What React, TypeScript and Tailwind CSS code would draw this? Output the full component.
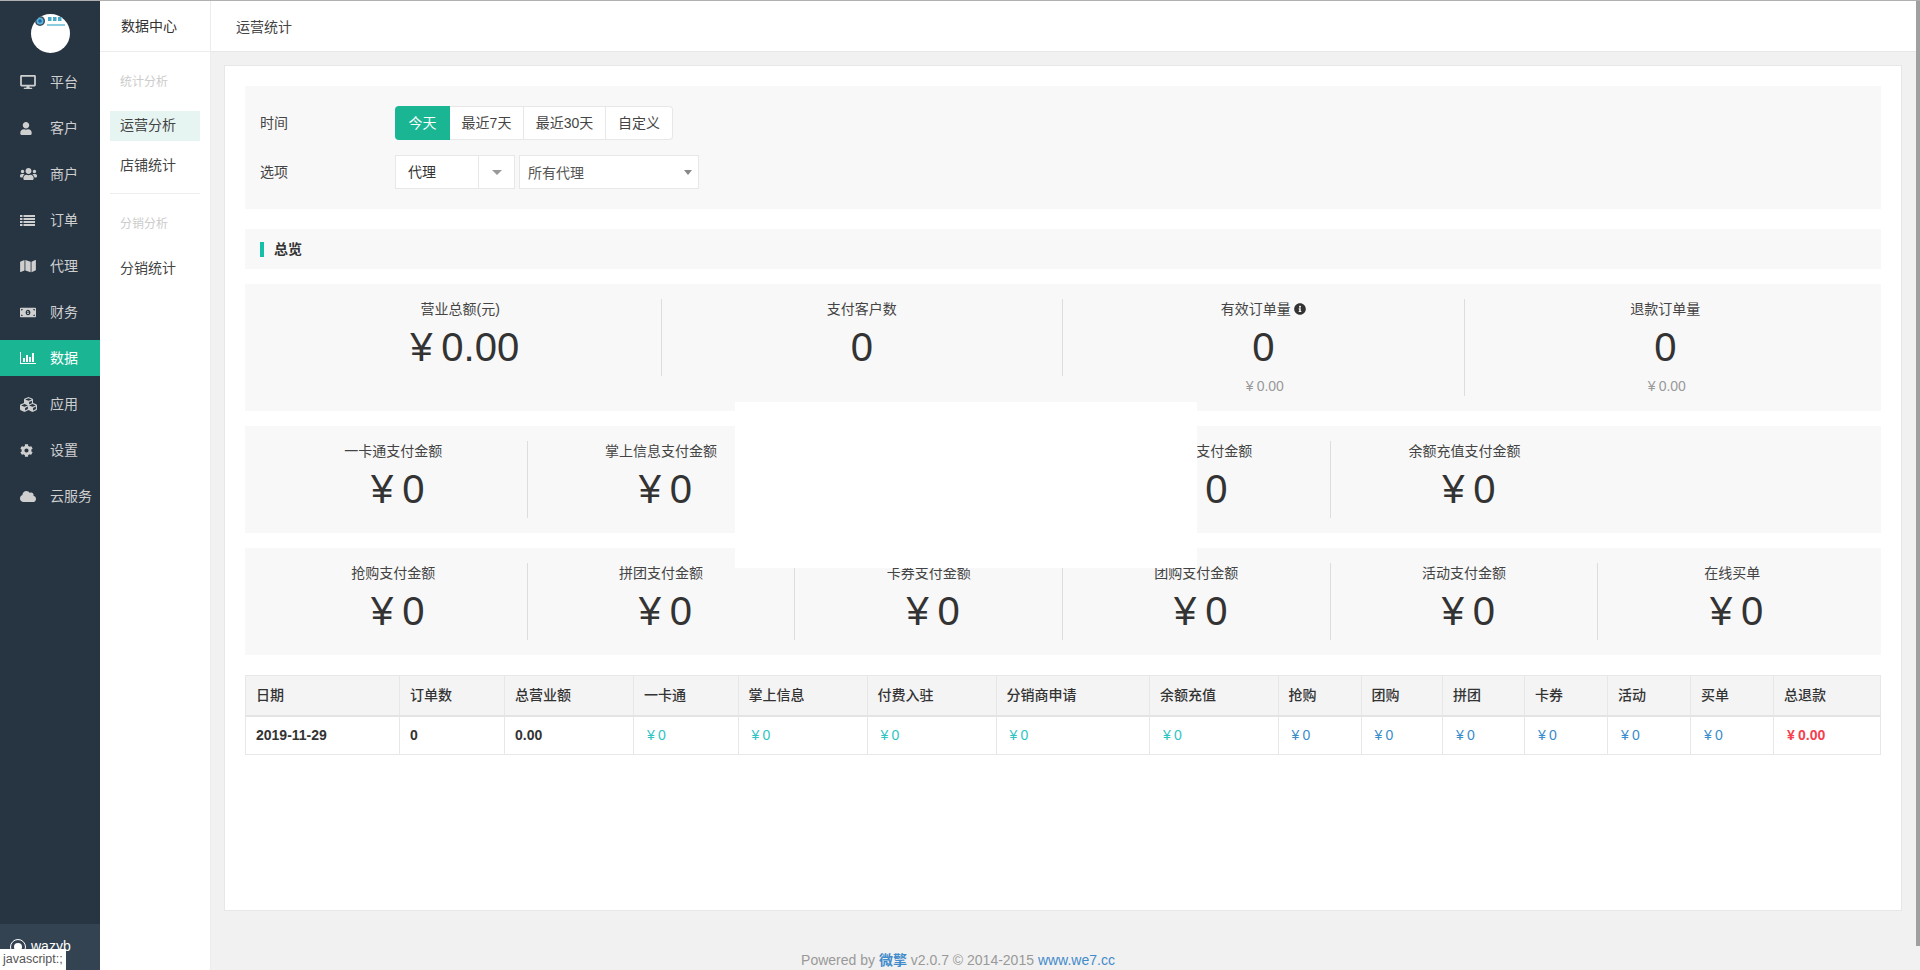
import type { ReactNode } from 'react';
import { FaCloud, FaCog, FaCubes, FaDesktop, FaInfoCircle, FaMap, FaMoneyBillAlt, FaUser, FaUsers } from 'react-icons/fa';

function ListIcon({ className }: { className?: string }) {
  return (
    <svg viewBox="0 0 15 11" fill="currentColor" className={className}>
      {[0, 3, 6, 9].map((y) => (
        <g key={y}>
          <rect x="0" y={y} width="2.5" height="2" />
          <rect x="3.5" y={y} width="11.5" height="2" />
        </g>
      ))}
    </svg>
  );
}

function ChartIcon({ className }: { className?: string }) {
  return (
    <svg viewBox="0 0 16 12" fill="currentColor" className={className}>
      <rect x="0" y="0" width="1" height="12" />
      <rect x="0" y="11" width="16" height="1" />
      <rect x="3" y="6" width="2" height="4" />
      <rect x="6" y="3" width="2" height="7" />
      <rect x="9" y="5" width="2" height="5" />
      <rect x="12" y="1" width="2" height="9" />
    </svg>
  );
}

const menu = [
  { label: '平台', icon: FaDesktop, size: 'h-[14px] w-[16px]' },
  { label: '客户', icon: FaUser, size: 'h-[13px] w-[12px]' },
  { label: '商户', icon: FaUsers, size: 'h-[16px] w-[17px]' },
  { label: '订单', icon: ListIcon, size: 'h-[11px] w-[15px]' },
  { label: '代理', icon: FaMap, size: 'h-[14px] w-[16px]' },
  { label: '财务', icon: FaMoneyBillAlt, size: 'h-[13px] w-[16px]' },
  { label: '数据', icon: ChartIcon, size: 'h-[12px] w-[16px]', active: true },
  { label: '应用', icon: FaCubes, size: 'h-[17px] w-[17px]' },
  { label: '设置', icon: FaCog, size: 'h-[13px] w-[13px]' },
  { label: '云服务', icon: FaCloud, size: 'h-[13px] w-[16px]' },
];

const payRow = ['一卡通支付金额', '掌上信息支付金额', '付费入驻支付金额', '分销申请支付金额', '余额充值支付金额'];
const promoRow = ['抢购支付金额', '拼团支付金额', '卡券支付金额', '团购支付金额', '活动支付金额', '在线买单'];

const columns = [
  { title: '日期', width: 'w-[154px]' },
  { title: '订单数', width: 'w-[105px]' },
  { title: '总营业额', width: 'w-[129px]' },
  { title: '一卡通', width: 'w-[104.5px]' },
  { title: '掌上信息', width: 'w-[129px]' },
  { title: '付费入驻', width: 'w-[129px]' },
  { title: '分销商申请', width: 'w-[153.5px]' },
  { title: '余额充值', width: 'w-[128.5px]' },
  { title: '抢购', width: 'w-[83px]' },
  { title: '团购', width: 'w-[81.5px]' },
  { title: '拼团', width: 'w-[82px]' },
  { title: '卡券', width: 'w-[83px]' },
  { title: '活动', width: 'w-[83px]' },
  { title: '买单', width: 'w-[83px]' },
  { title: '总退款', width: 'w-[106.5px]' },
];

function Yen() {
  return <span className="inline-block w-[1em] text-center">¥</span>;
}

function Logo() {
  return (
    <div className="h-[39px] w-[39px] overflow-hidden rounded-full bg-white">
      <svg viewBox="0 0 39 39" className="h-full w-full">
        <circle cx="9" cy="7" r="5" fill="#3b4a55" />
        <circle cx="9" cy="7" r="3.5" fill="#5ab4e0" />
        <circle cx="9" cy="7" r="1.8" fill="#1d6fa8" />
        <rect x="17" y="3" width="3.5" height="4" fill="#4aa8c8" />
        <rect x="22" y="3" width="3.5" height="4" fill="#4aa8c8" />
        <rect x="27" y="3" width="3.5" height="4" fill="#4aa8c8" />
        <rect x="16" y="10" width="18" height="2" fill="#8cccdf" />
      </svg>
    </div>
  );
}

function Sidebar() {
  return (
    <aside className="relative flex w-[100px] shrink-0 flex-col bg-[#273543]">
      <div className="flex h-[63px] justify-center pt-[13px]">
        <Logo />
      </div>
      <nav className="flex flex-col gap-[10px]">
        {menu.map(({ label, icon: Icon, size, active }) => (
          <div
            key={label}
            className={`flex h-[36px] items-center text-[14px] ${active ? 'bg-[#1ab694] text-white' : 'text-[#cfcfcf]'}`}
          >
            <span className="flex w-[50px] items-center pl-[20px]">
              <Icon className={size} />
            </span>
            {label}
          </div>
        ))}
      </nav>
      <div className="mt-auto flex h-[46px] items-center gap-[5px] bg-[#344352] pb-[1px] pl-[10px] text-[14px] text-white">
        <span className="flex h-[16px] w-[16px] items-center justify-center rounded-full border border-white">
          <span className="h-[8px] w-[8px] rounded-full bg-white" />
        </span>
        wazyb
      </div>
      <div className="absolute bottom-0 left-0 h-[21px] w-[66px] bg-white pl-[3px] text-[12.5px] leading-[20px] text-[#555]">
        javascript:;
      </div>
    </aside>
  );
}

function SubMenu() {
  return (
    <aside className="flex w-[111px] shrink-0 flex-col border-r border-[#ececec] bg-white text-[14px] text-[#444]">
      <div className="flex h-[51px] items-center border-b border-[#ececec] pl-[21px] pt-[1px] text-[#333]">数据中心</div>
      <div className="flex flex-col px-[10px]">
        <div className="flex h-[59px] items-center pl-[10px] text-[12px] text-[#ccc]">统计分析</div>
        <div className="flex h-[30px] items-center bg-[#e7f5f2] pb-[1px] pl-[10px]">运营分析</div>
        <div className="mb-[14px] flex h-[38px] items-center pl-[10px] pt-[10px]">店铺统计</div>
        <div className="h-px bg-[#eee]" />
        <div className="flex h-[60px] items-center pl-[10px] text-[12px] text-[#ccc]">分销分析</div>
        <div className="flex h-[28px] items-center pl-[10px]">分销统计</div>
      </div>
    </aside>
  );
}

function Stat({ label, value, sub, divider = true }: { label: ReactNode; value?: ReactNode; sub?: ReactNode; divider?: boolean }) {
  return (
    <div className={`text-center ${divider ? 'border-r border-[#ddd]' : ''}`}>
      <div className="h-[20px] text-[14px] leading-[20px] text-[#444]">{label}</div>
      <div className="h-[57px] text-[40px] leading-[57px] text-[#333]">{value}</div>
      {sub && <div className="h-[20px] text-[14px] leading-[20px] text-[#999]">{sub}</div>}
    </div>
  );
}

function MoneyRow({ labels }: { labels: string[] }) {
  return (
    <div className="grid grid-cols-6 bg-[#f8f8f8] px-[15px] py-[15px]">
      {labels.map((label, i) => (
        <Stat
          key={label}
          label={label}
          value={
            <>
              <Yen />0
            </>
          }
          divider={i < 5 && (labels.length === 6 || i < 4)}
        />
      ))}
    </div>
  );
}

function Filters() {
  const ranges = ['最近7天', '最近30天', '自定义'];
  return (
    <div className="flex flex-col gap-[15px] bg-[#f8f8f8] px-[15px] py-[20px] text-[14px] text-[#444]">
      <div className="flex h-[34px] items-center">
        <div className="w-[135px]">时间</div>
        <div className="flex h-[34px] items-stretch">
          <div className="flex w-[55px] items-center justify-center rounded-l-[4px] bg-[#1ab694] text-white">今天</div>
          {ranges.map((r, i) => (
            <div
              key={r}
              className={`flex items-center justify-center border-y border-r border-[#e7e7e7] bg-white ${
                i === 0 ? 'w-[74px]' : i === 1 ? 'w-[82px]' : 'w-[67px] rounded-r-[4px]'
              }`}
            >
              {r}
            </div>
          ))}
        </div>
      </div>
      <div className="flex h-[34px] items-center">
        <div className="w-[135px]">选项</div>
        <div className="flex h-[34px] w-[120px] items-stretch border border-[#e7e7e7] bg-white text-[#333]">
          <div className="flex w-[83px] items-center border-r border-[#e7e7e7] pl-[12px]">代理</div>
          <div className="flex flex-1 items-center justify-center">
            <span className="h-0 w-0 border-x-[5px] border-t-[5px] border-x-transparent border-t-[#999]" />
          </div>
        </div>
        <div className="ml-[4px] flex h-[34px] w-[180px] items-center justify-between border border-[#e7e7e7] bg-white pl-[8px] pr-[6px] text-[#555]">
          <span className="pt-[2px]">所有代理</span>
          <span className="h-0 w-0 border-x-[4px] border-t-[5px] border-x-transparent border-t-[#888]" />
        </div>
      </div>
    </div>
  );
}

function DataTable() {
  const teal = 'text-[#2fc4c4]';
  const blue = 'text-[#3a8ccb]';
  return (
    <table className="w-[1635px] table-fixed border-collapse border border-[#e7e7e7] text-[14px] text-[#333]">
      <thead>
        <tr className="h-[40px] border-b-2 border-[#e4e4e4] bg-[#f4f4f4]">
          {columns.map((c) => (
            <th key={c.title} className={`${c.width} border-r border-[#e7e7e7] px-[10px] text-left font-medium`}>
              {c.title}
            </th>
          ))}
        </tr>
      </thead>
      <tbody>
        <tr className="h-[39px] font-bold">
          <td className="border-r border-[#e7e7e7] px-[10px]">2019-11-29</td>
          <td className="border-r border-[#e7e7e7] px-[10px]">0</td>
          <td className="border-r border-[#e7e7e7] px-[10px]">0.00</td>
          {columns.slice(3, 14).map((c, i) => (
            <td key={c.title} className={`border-r border-[#e7e7e7] px-[10px] font-normal ${i < 5 ? teal : blue}`}>
              <Yen />0
            </td>
          ))}
          <td className="px-[10px] text-[#f5404f]">
            <Yen />0.00
          </td>
        </tr>
      </tbody>
    </table>
  );
}

function Content() {
  return (
    <div className="relative flex h-[846px] flex-col border border-[#e7e7e7] bg-white p-[20px]">
      <Filters />
      <div className="mt-[20px] flex h-[40px] items-center bg-[#f8f8f8] pl-[15px] text-[14px] font-semibold text-[#333]">
        <span className="mr-[10px] h-[15px] w-[4px] bg-[#14c0a8]" />
        总览
      </div>
      <div className="mt-[15px] grid grid-cols-4 bg-[#f8f8f8] px-[15px] py-[15px]">
        <div className="self-start">
          <Stat label="营业总额(元)" value={<><Yen />0.00</>} />
        </div>
        <div className="self-start">
          <Stat label="支付客户数" value="0" />
        </div>
        <Stat
          label={
            <span className="inline-flex items-center gap-[3px]">
              有效订单量
              <FaInfoCircle className="h-[12px] w-[12px] text-[#333]" />
            </span>
          }
          value="0"
          sub={<><Yen />0.00</>}
        />
        <Stat label="退款订单量" value="0" sub={<><Yen />0.00</>} divider={false} />
      </div>
      <div className="mt-[15px]">
        <MoneyRow labels={payRow} />
      </div>
      <div className="mt-[15px]">
        <MoneyRow labels={promoRow} />
      </div>
      <div className="mt-[20px]">
        <DataTable />
      </div>
      {/* white box that covers the middle of the stats in the capture */}
      <div className="absolute left-[510px] top-[336px] h-[166px] w-[462px] bg-white" />
    </div>
  );
}

export default function App() {
  return (
    <div className="flex h-[970px] flex-col overflow-hidden bg-[#f1f1f1] font-['Liberation_Sans','Noto_Sans_CJK_SC',sans-serif]">
      <div className="h-px shrink-0 bg-[#b0b0b0]" />
      <div className="flex min-h-0 flex-1">
        <Sidebar />
        <SubMenu />
        <main className="flex min-w-0 flex-1 flex-col">
          <header className="flex h-[51px] shrink-0 items-center border-b border-[#e7e7e7] bg-white pl-[25px] pt-[2px] text-[14px] text-[#444]">
            运营统计
          </header>
          <div className="pl-[13px] pr-[14px] pt-[13px]">
            <Content />
          </div>
          <footer className="mt-[39px] pr-[211px] text-center text-[14px] leading-[20px] text-[#999]">
            Powered by <span className="font-bold text-[#428bca]">微擎</span> v2.0.7 © 2014-2015{' '}
            <span className="text-[#428bca]">www.we7.cc</span>
          </footer>
        </main>
        <div className="h-[945px] w-[4px] shrink-0 bg-[#a0a0a0]" />
      </div>
    </div>
  );
}
